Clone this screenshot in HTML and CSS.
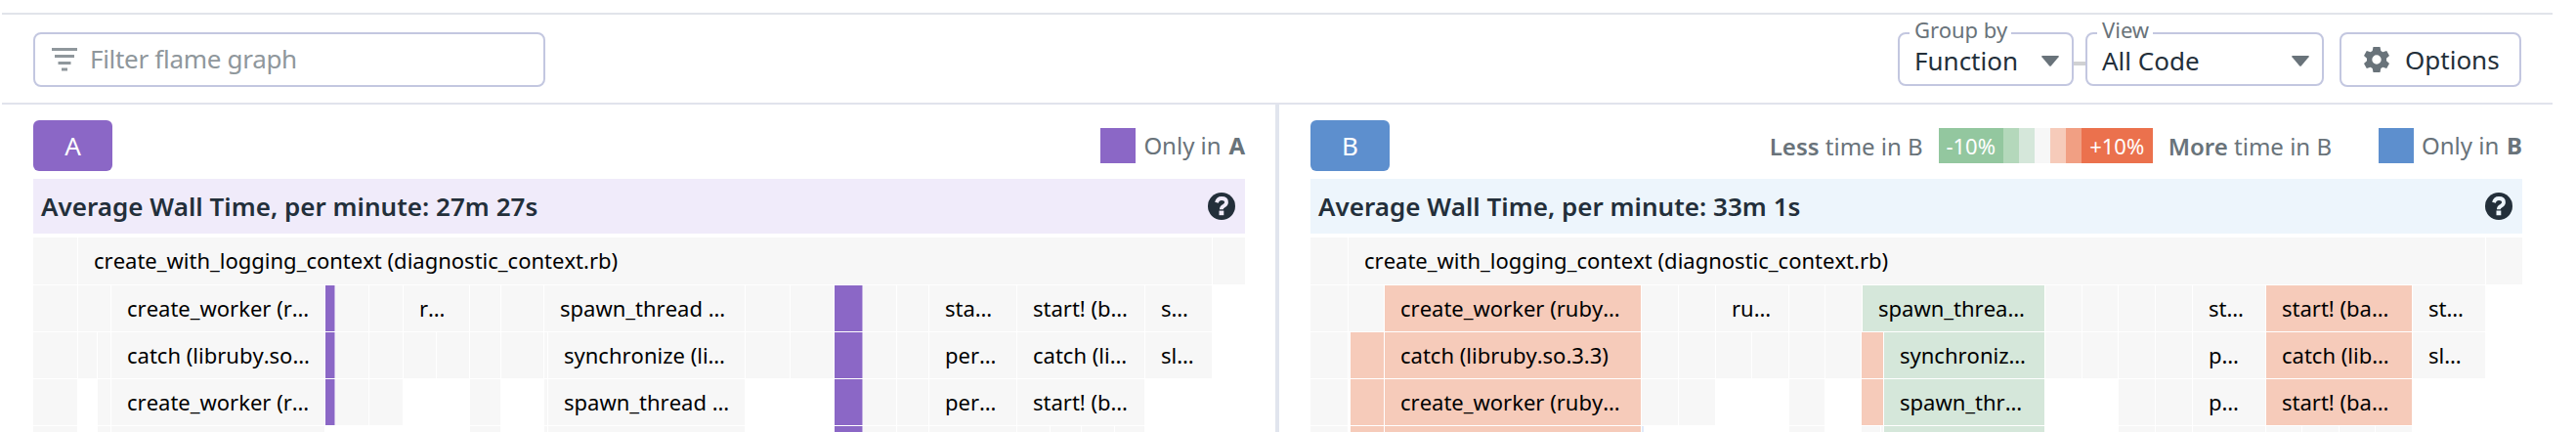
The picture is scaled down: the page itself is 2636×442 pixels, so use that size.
FILE: index.html
```html
<!DOCTYPE html>
<html lang="en">
<head>
<meta charset="utf-8">
<title>Flame graph comparison</title>
<link rel="stylesheet" href="styles.css">
</head>
<body>
<div class="page">
  <header class="toolbar">
    <div class="search">
      <svg class="search-icon" viewBox="0 0 26 24" width="26" height="24"><path d="M0 0h26v3H0zM3 7h20v3H3zM6.500 14h13v3h-13zM10 20.500h6v3h-6z" fill="currentColor"/></svg>
      <span class="search-text">Filter flame graph</span>
    </div>
    <div class="controls">
      <div class="select select-group"><span class="select-label">Group by</span><span class="select-value">Function</span><svg class="caret" viewBox="0 0 18 11" width="18" height="11"><path d="M1 0h16q1.500 0 .6 1.200L10 10.300q-1 1-2 0L.4 1.200Q-.5 0 1 0z" fill="currentColor"/></svg></div>
      <div class="connector"></div>
      <div class="select select-view"><span class="select-label">View</span><span class="select-value">All Code</span><svg class="caret" viewBox="0 0 18 11" width="18" height="11"><path d="M1 0h16q1.500 0 .6 1.200L10 10.300q-1 1-2 0L.4 1.200Q-.5 0 1 0z" fill="currentColor"/></svg></div>
      <div class="options">
        <svg class="gear" viewBox="0 0 26 28" width="26" height="28"><path fill="currentColor" fill-rule="evenodd" d="M9.500 1h7l.8 4 2 1.200 3.900-1.300 2.800 5.200-3 2.700v2.400l3 2.700-2.800 5.200-3.900-1.300-2 1.200-.8 4h-7l-.8-4-2-1.200-3.900 1.300L0 17.900l3-2.700v-2.400l-3-2.700 2.800-5.200 3.900 1.300 2-1.200zM13 9.300a4.700 4.700 0 1 0 0 9.400 4.700 4.700 0 0 0 0-9.400z"/></svg>
        <span>Options</span>
      </div>
    </div>
  </header>
  <main class="panes">
    <section class="pane pane-a">
      <div class="pane-head">
        <div class="tag tag-a">A</div>
        <div class="legend"><i class="swatch only-a"></i><span class="only">Only in <b>A</b></span></div>
      </div>
      <div class="title title-a"><span>Average Wall Time, per minute: 27m 27s</span><svg class="help" viewBox="0 0 28 28" width="28" height="28"><circle cx="14" cy="14" r="14" fill="currentColor"/><path d="M9 10.300q1-4.300 5-4.300 5 0 5 4 0 2.300-2.600 3.700-2.600 1.300-2.600 3.600" fill="none" stroke="#f0ebfa" stroke-width="3.800"/><path d="M11.500 18.600h4.800v4.600h-4.800z" fill="#f0ebfa"/></svg></div>
      <div class="flame">
        <div class="row first"><i style="width:46px"></i><i style="width:1161px">create_with_logging_context (diagnostic_context.rb)</i><i style="width:34px"></i></div>
        <div class="row"><i style="width:46px"></i><i style="width:34px"></i><i style="width:219px">create_worker (r…</i><i class="pa" style="width:10px"></i><i style="width:35px"></i><i style="width:35px"></i><i style="width:68px">r…</i><i style="width:32px"></i><i style="width:44px"></i><i style="width:206px">spawn_thread …</i><i style="width:46px"></i><i style="width:45px"></i><i class="pa" style="width:29px"></i><i style="width:35px"></i><i style="width:33px"></i><i style="width:90px">sta…</i><i style="width:131px">start! (b…</i><i style="width:69px">s…</i></div>
        <div class="row"><i style="width:46px"></i><i style="width:20px"></i><i style="width:14px"></i><i style="width:219px">catch (libruby.so…</i><i class="pa" style="width:10px"></i><i style="width:35px"></i><i style="width:35px"></i><i style="width:34px"></i><i style="width:34px"></i><i style="width:32px"></i><i style="width:44px"></i><i style="width:4px"></i><i style="width:202px">synchronize (li…</i><i style="width:46px"></i><i style="width:45px"></i><i class="pa" style="width:29px"></i><i style="width:35px"></i><i style="width:33px"></i><i style="width:90px">per…</i><i style="width:131px">catch (li…</i><i style="width:69px">sl…</i></div>
        <div class="row"><i style="width:46px"></i><i class="gap" style="width:20px"></i><i style="width:14px"></i><i style="width:219px">create_worker (r…</i><i class="pa" style="width:10px"></i><i style="width:35px"></i><i style="width:35px"></i><i class="gap" style="width:68px"></i><i style="width:32px"></i><i class="gap" style="width:44px"></i><i style="width:4px"></i><i style="width:202px">spawn_thread …</i><i class="gap" style="width:91px"></i><i class="pa" style="width:29px"></i><i style="width:35px"></i><i style="width:33px"></i><i style="width:90px">per…</i><i style="width:131px">start! (b…</i></div>
        <div class="row"><i style="width:46px"></i><i class="gap" style="width:20px"></i><i style="width:14px"></i><i style="width:219px"></i><i class="gap" style="width:148px"></i><i style="width:32px"></i><i class="gap" style="width:44px"></i><i style="width:4px"></i><i style="width:202px"></i><i class="gap" style="width:91px"></i><i class="pa" style="width:29px"></i><i style="width:35px"></i><i style="width:33px"></i><i style="width:90px"></i><i style="width:34px"></i><i style="width:32px"></i><i style="width:34px"></i><i style="width:31px"></i></div>
      </div>
    </section>
    <section class="pane pane-b">
      <div class="pane-head">
        <div class="tag tag-b">B</div>
        <div class="legend">
          <span class="less"><b>Less</b> time in B</span>
          <div class="scale"><i class="g3">-10%</i><i class="g2"></i><i class="g1"></i><i class="zero"></i><i class="r1"></i><i class="r2"></i><i class="r3">+10%</i></div>
          <span class="more"><b>More</b> time in B</span>
          <i class="swatch only-b"></i><span class="only">Only in <b>B</b></span>
        </div>
      </div>
      <div class="title title-b"><span>Average Wall Time, per minute: 33m 1s</span><svg class="help" viewBox="0 0 28 28" width="28" height="28"><circle cx="14" cy="14" r="14" fill="currentColor"/><path d="M9 10.300q1-4.300 5-4.300 5 0 5 4 0 2.300-2.600 3.700-2.600 1.300-2.600 3.600" fill="none" stroke="#edf5fc" stroke-width="3.800"/><path d="M11.500 18.600h4.800v4.600h-4.800z" fill="#edf5fc"/></svg></div>
      <div class="flame">
        <div class="row first"><i style="width:39px"></i><i style="width:1164px">create_with_logging_context (diagnostic_context.rb)</i><i style="width:38px"></i></div>
        <div class="row"><i style="width:39px"></i><i style="width:37px"></i><i class="up" style="width:263px">create_worker (ruby…</i><i style="width:38px"></i><i style="width:38px"></i><i style="width:75px">ru…</i><i style="width:37px"></i><i style="width:38px"></i><i class="down" style="width:187px">spawn_threa…</i><i style="width:38px"></i><i style="width:37px"></i><i style="width:38px"></i><i style="width:38px"></i><i style="width:75px">st…</i><i class="up" style="width:150px">start! (ba…</i><i style="width:75px">st…</i></div>
        <div class="row"><i style="width:39px"></i><i style="width:2px"></i><i class="up" style="width:35px"></i><i class="up" style="width:263px">catch (libruby.so.3.3)</i><i style="width:38px"></i><i style="width:38px"></i><i style="width:37px"></i><i style="width:38px"></i><i style="width:37px"></i><i style="width:37px"></i><i class="up" style="width:23px"></i><i class="down" style="width:165px">synchroniz…</i><i style="width:38px"></i><i style="width:37px"></i><i style="width:38px"></i><i style="width:38px"></i><i style="width:75px">p…</i><i class="up" style="width:150px">catch (lib…</i><i style="width:75px">sl…</i></div>
        <div class="row"><i style="width:39px"></i><i class="gap" style="width:2px"></i><i class="up" style="width:35px"></i><i class="up" style="width:263px">create_worker (ruby…</i><i style="width:38px"></i><i style="width:38px"></i><i class="gap" style="width:75px"></i><i style="width:37px"></i><i class="gap" style="width:37px"></i><i class="up" style="width:23px"></i><i class="down" style="width:165px">spawn_thr…</i><i class="gap" style="width:75px"></i><i style="width:38px"></i><i style="width:38px"></i><i style="width:75px">p…</i><i class="up" style="width:150px">start! (ba…</i></div>
        <div class="row"><i style="width:39px"></i><i class="gap" style="width:2px"></i><i class="up" style="width:35px"></i><i class="up" style="width:263px"></i><i class="pb" style="width:2px"></i><i class="gap" style="width:149px"></i><i style="width:37px"></i><i class="gap" style="width:37px"></i><i style="width:20px"></i><i style="width:3px"></i><i class="down" style="width:165px"></i><i class="gap" style="width:75px"></i><i style="width:38px"></i><i style="width:38px"></i><i style="width:75px"></i><i style="width:37px"></i><i style="width:38px"></i><i style="width:37px"></i><i style="width:38px"></i></div>
      </div>
    </section>
  </main>
</div>
</body>
</html>
```
FILE: styles.css
```css
* { box-sizing: border-box; }
body {
  margin: 0;
  background: #fff;
  color: #232f3a;
  font-family: "Noto Sans", sans-serif;
}
i { font-style: normal; }
svg { display: block; flex: none; }

.page {
  width: 2636px;
  height: 442px;
  padding: 13px 24px 0 2px;
  overflow: hidden;
}

.toolbar {
  display: flex;
  justify-content: space-between;
  height: 94px;
  padding: 18px 32px 0;
  border-top: 2px solid #e1e4ea;
  border-bottom: 2px solid #e1e3ec;
}
.search {
  display: flex;
  align-items: center;
  width: 524px;
  height: 56px;
  padding-left: 17px;
  border: 2px solid #c3c7e0;
  border-radius: 8px;
  color: #8f979c;
}
.search-text { margin-left: 13px; padding-bottom: 2px; font-size: 26px; letter-spacing: -0.3px; }

.controls { display: flex; }
.select {
  position: relative;
  display: flex;
  align-items: center;
  justify-content: space-between;
  height: 55px;
  padding: 3px 13px 0 15px;
  border: 2px solid #c3c7e0;
  border-radius: 8px;
  font-size: 26px;
}
.select-group { width: 180px; }
.select-view { width: 244px; }
.select-label {
  position: absolute;
  top: -20px;
  left: 10px;
  padding: 0 4px 0 5px;
  background: #fff;
  color: #69737a;
  font-size: 22px;
  line-height: 30px;
}
.caret { color: #69737a; }
.connector { width: 12px; height: 4px; margin-top: 30px; background: #d0d1d3; }
.options {
  display: flex;
  align-items: center;
  width: 186px;
  height: 56px;
  margin-left: 16px;
  padding-left: 23px;
  border: 2px solid #c3c7e0;
  border-radius: 8px;
  font-size: 26px;
}
.gear { margin-right: 16px; color: #69737a; }

.panes { display: flex; height: 340px; }
.pane { padding-top: 16px; }
.pane-a { width: 1307px; padding-left: 32px; border-right: 4px solid #e1e5ee; }
.pane-b { width: 1303px; padding-left: 32px; }
.pane-head, .title { width: 1240px; display: flex; align-items: center; justify-content: space-between; }
.pane-head { height: 52px; margin-bottom: 8px; }
.tag {
  width: 81px;
  height: 52px;
  border-radius: 6px;
  color: #fff;
  font-size: 26px;
  line-height: 52px;
  text-align: center;
}
.tag-a, .only-a { background: #8b67c6; }
.tag-b, .only-b { background: #5d8fce; }
.legend { display: flex; align-items: center; color: #69737a; font-size: 24px; white-space: nowrap; }
.legend b { font-weight: 600; }
.only { padding-bottom: 2px; }
.legend .only b { margin-left: 1.5px; font-weight: 700; }
.swatch { width: 36px; height: 36px; margin-right: 8px; }
.scale { display: flex; height: 36px; margin: 0 16px; color: #fff; font-size: 22px; line-height: 36px; text-align: center; }
.scale i { width: 16px; }
.scale .g3 { width: 66px; background: #93c79f; }
.g2 { background: #b4d8bb; }
.g1 { background: #d5e7da; }
.zero { background: #f7f7f7; }
.r1 { background: #f6cbba; }
.r2 { background: #f19f83; }
.scale .r3 { width: 73px; background: #eb714d; }
.more { margin-right: 48px; }

.title {
  height: 56px;
  margin-bottom: 4px;
  padding: 0 10px 0 8px;
  font-size: 26px;
  font-weight: 600;
  letter-spacing: 0.03px;
}
.title-a { background: #f0ebfa; }
.title-b { background: #edf5fc; }
.title span { white-space: nowrap; }

.flame { width: 1241px; }
.row { display: flex; height: 48px; }
.row.first { height: 49px; }
.row i {
  flex: none;
  height: 100%;
  padding-left: 16px;
  overflow: hidden;
  border: 0 solid #fff;
  border-width: 0 1px 1px 0;
  background: #f7f7f7;
  color: #000;
  font-size: 22px;
  font-kerning: none;
  line-height: 47px;
  white-space: nowrap;
}
.row i:empty { padding: 0; }
.row .gap { background: none; }
.row .pa { background: #8b67c6; box-shadow: inset -1px 0 #c5b3e3; border-right-width: 0; }
.row .pb { background: #dfeafa; border-right-width: 0; }
.row .up { background: #f6cbba; }
.row .down { background: #d5e7da; }
```
